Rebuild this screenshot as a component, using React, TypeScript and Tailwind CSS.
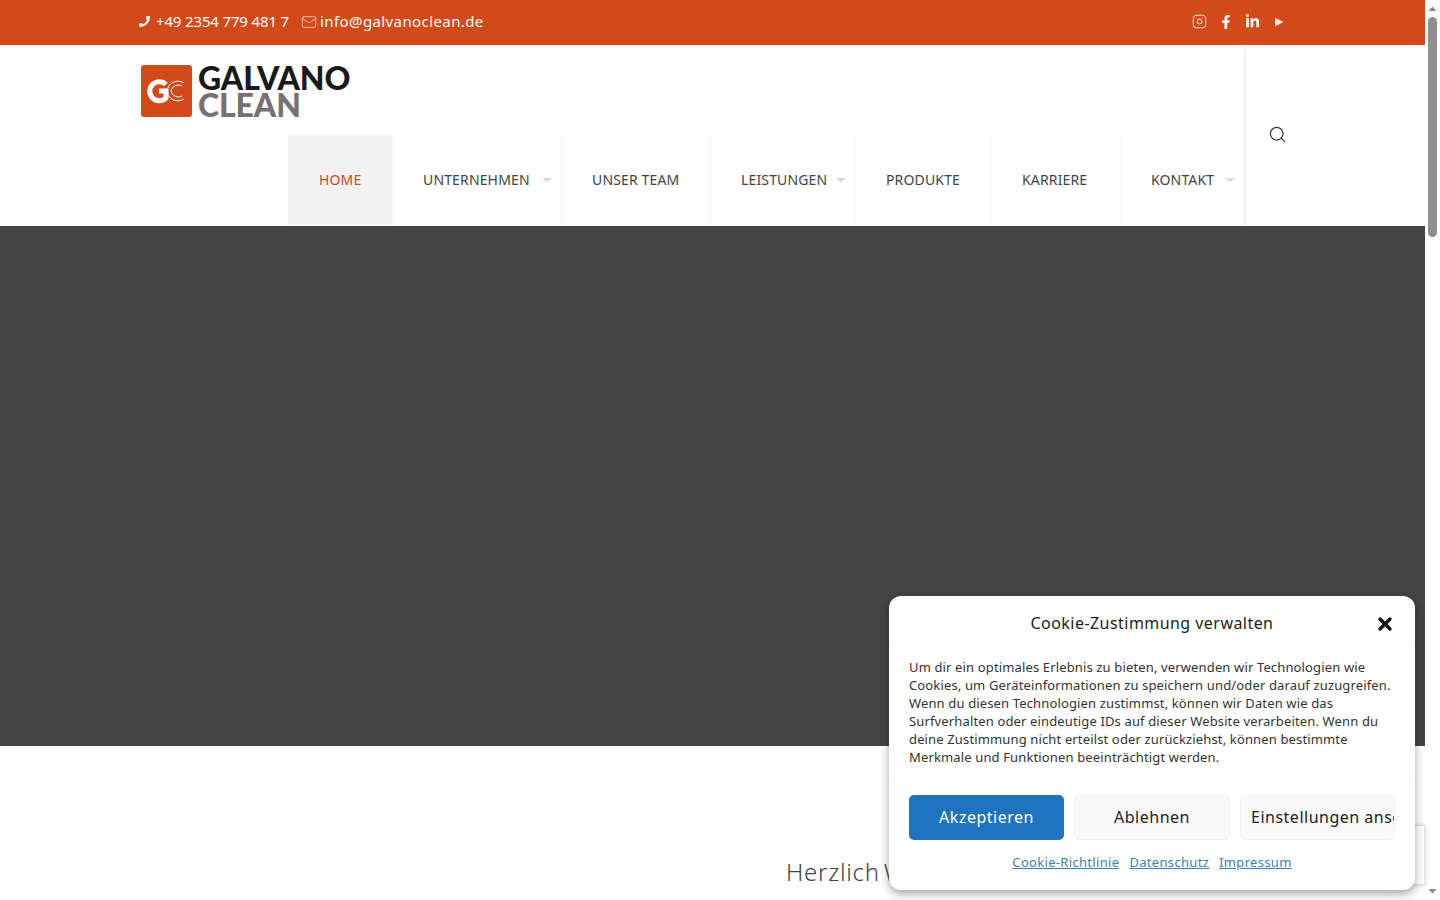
import { Phone, Mail, Search, Instagram, X } from 'lucide-react'
import { FaFacebookF, FaLinkedinIn } from 'react-icons/fa'

const font = { fontFamily: '"Noto Sans", sans-serif' }

const navItems = [
  { label: 'HOME', width: 'w-[105px]', active: true },
  { label: 'UNTERNEHMEN', width: 'w-[169px]', caret: true },
  { label: 'UNSER TEAM', width: 'w-[149px]' },
  { label: 'LEISTUNGEN', width: 'w-[145px]', caret: true },
  { label: 'PRODUKTE', width: 'w-[136px]' },
  { label: 'KARRIERE', width: 'w-[129px]' },
  { label: 'KONTAKT', width: 'w-[124px]', caret: true },
]

function Logo() {
  return (
    <div className="flex items-center gap-[6px]">
      <div className="w-[51px] h-[52px] rounded-[3px] bg-[#d24a18] flex items-center justify-center">
        <svg width="40" height="30" viewBox="0 0 40 30" fill="none">
          <path d="M19 8.500A9.500 9.500 0 1 0 19 22V15h-7" stroke="#fff" strokeWidth="5" />
          <path d="M37 7A11 11 0 0 0 20 15a11 11 0 0 0 17 8" stroke="#fff" strokeWidth="1" />
          <path d="M35 10A7.500 7.500 0 0 0 24 15a7.500 7.500 0 0 0 11 5" stroke="#fff" strokeWidth="1" />
        </svg>
      </div>
      <div className="leading-none font-black text-[32px] tracking-[-0.1px]" style={{ fontFamily: '"Lato", sans-serif' }}>
        <div className="text-[#1a1a1a] h-[27px] leading-[27px]">GALVANO</div>
        <div className="text-[#777074] h-[27px] leading-[27px]">CLEAN</div>
      </div>
    </div>
  )
}

export default function App() {
  return (
    <div className="relative h-[900px] w-[1440px] overflow-hidden flex bg-white" style={font}>
      <div className="w-[1425px] h-full flex flex-col">
        {/* top bar */}
        <div className="h-[45px] bg-[#d24a18] text-white text-[15px] flex items-center justify-between pl-[138px] pr-[138px] pb-[2px]">
          <div className="flex items-center">
            <Phone size={13} fill="#fff" strokeWidth={0} className="mr-[5px] -scale-x-100" />
            <span className="tracking-[-0.15px]">+49 2354 779 481 7</span>
            <Mail size={16} strokeWidth={1.2} className="ml-[12px] mr-[3px] text-[#f6d5c6]" />
            <span className="tracking-[0.4px]">info@galvanoclean.de</span>
          </div>
          <div className="flex items-center gap-[12px] pr-[1px]">
            <Instagram size={15} strokeWidth={1.6} className="text-[#fbe3d8]" />
            <FaFacebookF size={14} color="#fff" />
            <FaLinkedinIn size={15} color="#fff" />
            <svg width="14" height="14" viewBox="0 0 14 14"><path d="M3 2.500l8.500 4.500-8.500 4.500z" fill="#fbe3d8" /></svg>
          </div>
        </div>

        {/* header */}
        <div className="h-[181px] flex pl-[141px] pr-[140px] relative">
          <div className="flex-1 flex flex-col">
            <div className="h-[90px] pt-[19px]"><Logo /></div>
            <div className="h-[90px] flex pl-[147px] text-[14px] tracking-[0.15px] text-[#444]">
              {navItems.map((item) => (
                <div
                  key={item.label}
                  className={`${item.width} relative flex items-center pb-[2px] ${item.active ? 'bg-[#f2f2f2] text-[#d24a18] pl-[31px]' : 'pl-[30px] border-r border-[#f1f1f1]'}`}
                >
                  <span>{item.label}</span>
                  {item.caret && (
                    <span className="absolute right-[9px] top-[43px] w-0 h-0 border-x-[5px] border-x-transparent border-t-[4px] border-t-[#d8d8d8]" />
                  )}
                </div>
              ))}
            </div>
          </div>
          <div className="absolute left-[1244px] top-0 h-[181px] w-[43px] flex items-center justify-end border-l border-[#eee] pb-[2px]">
            <Search size={19} strokeWidth={1.5} className="text-[#333]" />
          </div>
        </div>

        {/* hero */}
        <div className="h-[520px] bg-[#444444]" />

        {/* intro */}
        <div className="flex-1 pt-[110px] pl-[786px] text-[24px] leading-[32px] tracking-[0.7px] [word-spacing:-3px] text-[#444] font-light">Herzlich Willkommen</div>
      </div>

      {/* scrollbar */}
      <div className="w-[15px] h-full flex flex-col items-center bg-white">
        <svg width="15" height="17" viewBox="0 0 15 17"><path d="M3.500 11l4-4.500 4 4.500z" fill="#8a8a8a" /></svg>
        <div className="w-[9px] h-[220px] rounded-[5px] bg-[#8f8f8f]" />
        <div className="flex-1" />
        <svg width="15" height="17" viewBox="0 0 15 17"><path d="M3.500 6l4 4.500 4-4.500z" fill="#8a8a8a" /></svg>
      </div>

      {/* recaptcha badge behind the dialog */}
      <div className="absolute right-[15px] top-[825px] w-[40px] h-[60px] bg-white border border-[#e3e3e3] shadow-[0_0_5px_rgba(128,128,128,0.4)]" />

      {/* cookie dialog */}
      <div className="absolute left-[889px] top-[596px] w-[526px] h-[294px] bg-white rounded-[12px] shadow-[0_4px_10px_rgba(0,0,0,0.35)] text-[#222]">
        <div className="relative h-[50px] flex items-center justify-center pt-[4px] border-b border-[#f5f5f5] text-[16px] tracking-[0.45px]">
          Cookie-Zustimmung verwalten
          <X size={20} strokeWidth={4} className="absolute right-[20px] top-[18px] text-[#111]" />
        </div>
        <div className="h-[135px] px-[20px] pt-[12px] text-[13px] leading-[18px] tracking-[0.14px] border-b border-[#f5f5f5] text-[#333]">
          Um dir ein optimales Erlebnis zu bieten, verwenden wir Technologien wie Cookies, um Geräteinformationen zu speichern und/oder darauf zuzugreifen. Wenn du diesen Technologien zustimmst, können wir Daten wie das Surfverhalten oder eindeutige IDs auf dieser Website verarbeiten. Wenn du deine Zustimmung nicht erteilst oder zurückziehst, können bestimmte Merkmale und Funktionen beeinträchtigt werden.
        </div>
        <div className="px-[20px] pt-[14px] flex gap-[10px] text-[16px] tracking-[0.5px]">
          <div className="w-[155px] h-[45px] rounded-[5px] bg-[#1e73be] text-white flex items-center justify-center pb-[2px]">Akzeptieren</div>
          <div className="w-[156px] h-[45px] rounded-[5px] bg-[#f9f9f9] border border-[#f2f2f2] flex items-center justify-center pb-[2px]">Ablehnen</div>
          <div className="w-[155px] h-[45px] rounded-[5px] bg-[#f9f9f9] border border-[#f2f2f2] flex items-center pl-[10px] pb-[2px] overflow-hidden whitespace-nowrap">Einstellungen ansehen</div>
        </div>
        <div className="mt-[13px] flex justify-center gap-[10px] text-[13px] tracking-[0.32px] text-[#3d7fb8] underline">
          <span>Cookie-Richtlinie</span>
          <span>Datenschutz</span>
          <span>Impressum</span>
        </div>
      </div>
    </div>
  )
}
